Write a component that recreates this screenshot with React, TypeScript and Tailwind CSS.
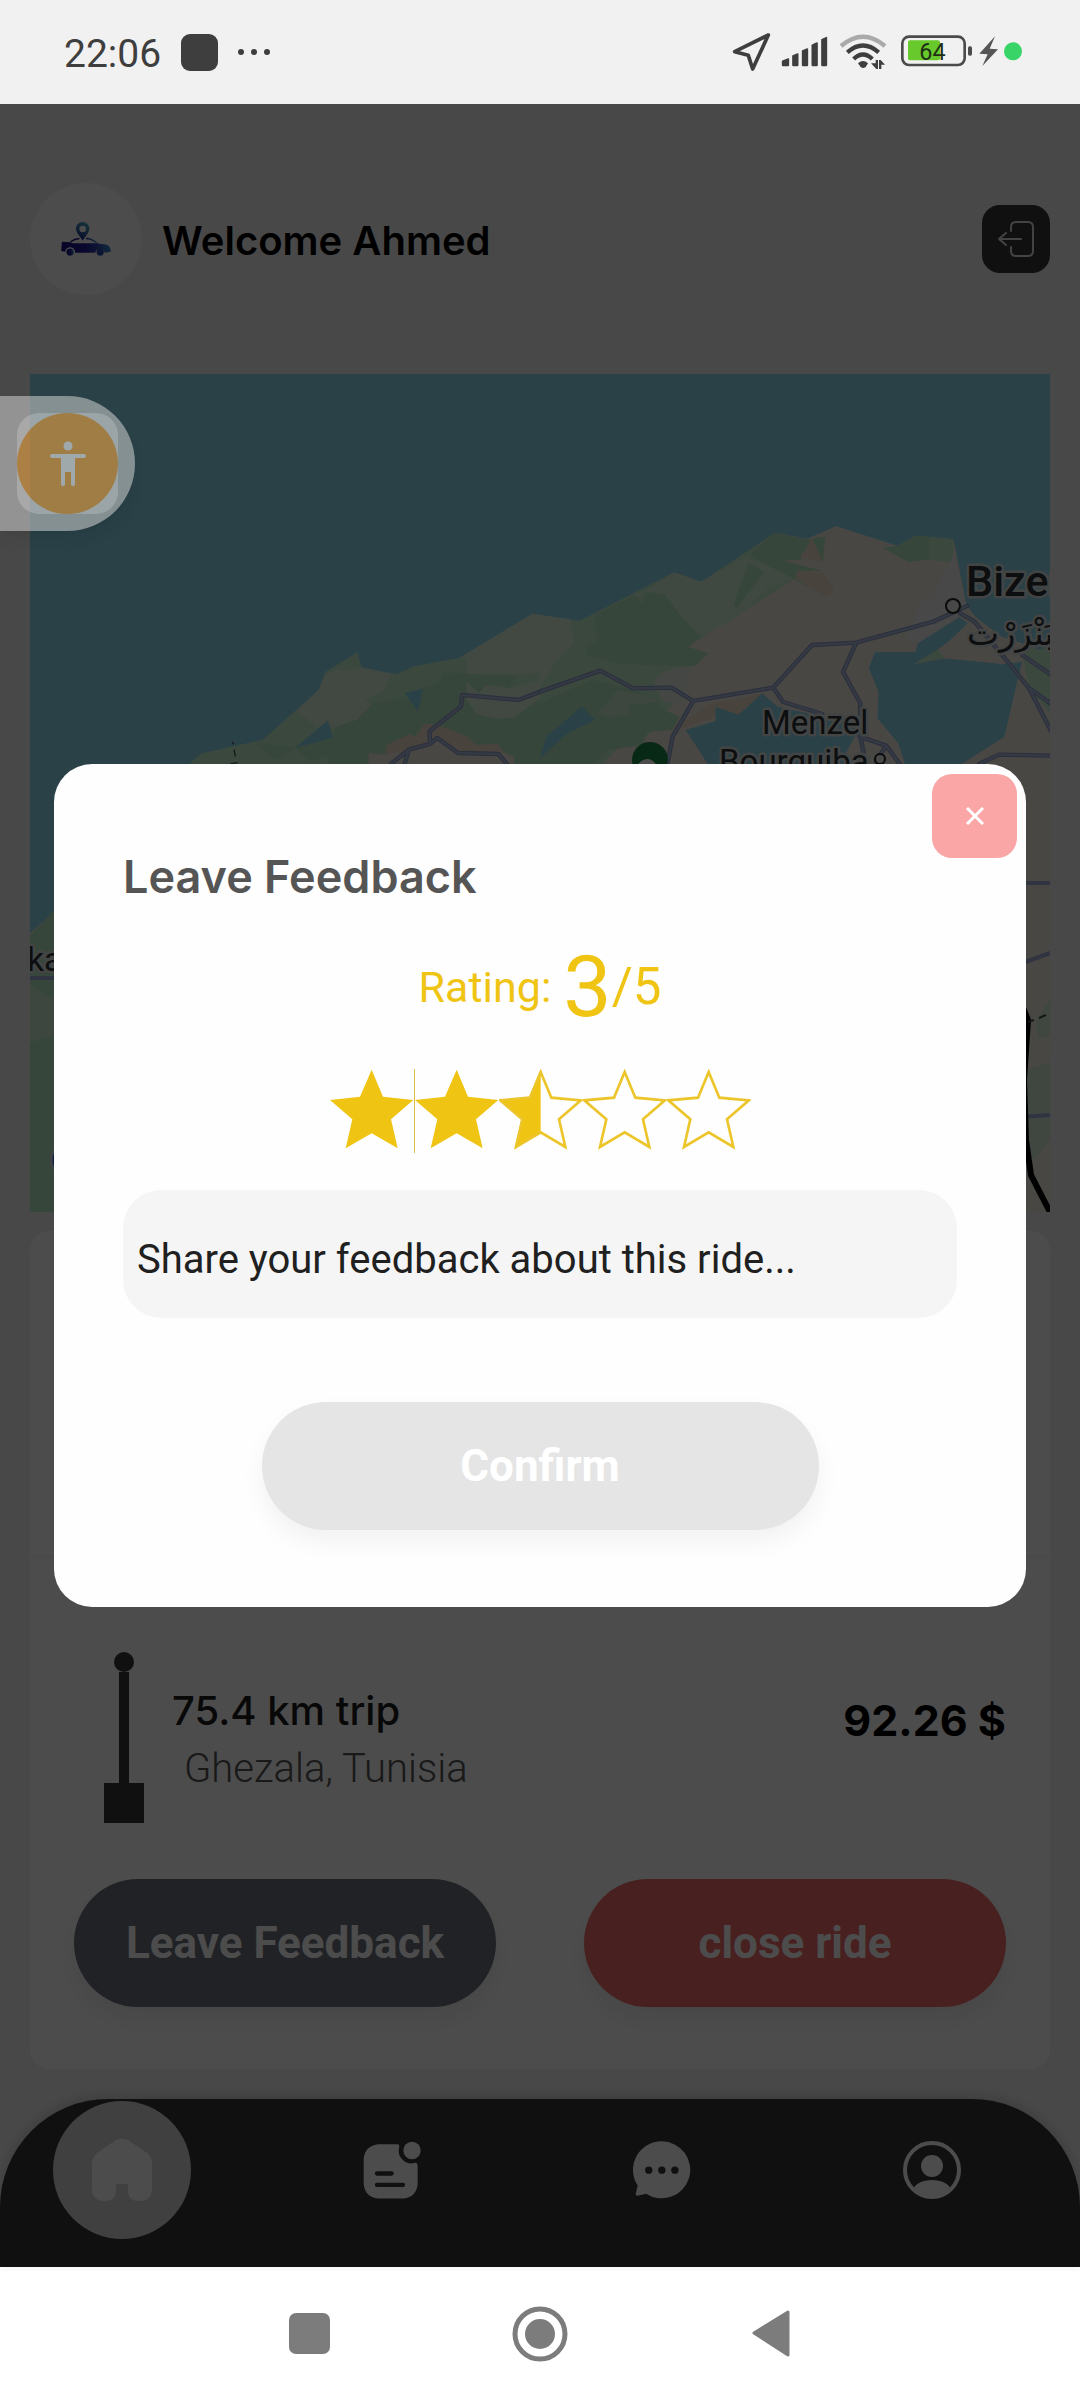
import React, { useState } from "react";

function StatusBar() {
  return (
    <div className="flex h-[104px] items-center justify-between bg-[#f1f1f1] pl-16 pr-14 text-[#3e3e3e]">
      <div className="flex items-center gap-5">
        <span className="pt-1 text-[39px] leading-[46px]">22:06</span>
        <span className="size-[37px] rounded-[9px] bg-[#3e3e3e]" />
        <span className="flex gap-[7px]">
          <span className="size-[6px] rounded-full bg-current" />
          <span className="size-[6px] rounded-full bg-current" />
          <span className="size-[6px] rounded-full bg-current" />
        </span>
      </div>
      <svg viewBox="96 98 876 120" className="h-10 w-[292px]" role="img" aria-label="Location on, full signal, Wi-Fi, battery 64 percent, charging">
        <path d="M205 107 L104 157 L145 168 L158 209 Z" fill="none" stroke="#3e3e3e" strokeWidth="11" strokeLinejoin="round" />
        <g fill="#3e3e3e" stroke="#3e3e3e" strokeWidth="5" strokeLinejoin="round">
          <path d="M248 186 L265 179 V198 H248Z" />
          <path d="M279 170 L293 164 V198 H279Z" />
          <path d="M308 155 L322 149 V198 H308Z" />
          <path d="M337 138 L351 131 V198 H337Z" />
          <path d="M366 121 L379 115 V198 H366Z" />
        </g>
        <g fill="none" strokeWidth="13">
          <path d="M423 140 Q489 84 555 140" stroke="#aaaaaa" />
          <path d="M442 159 Q489 118 536 159" stroke="#3e3e3e" />
          <path d="M461 179 Q489 152 517 179" stroke="#3e3e3e" />
        </g>
        <path d="M474 192 Q489 178 504 192 L497 203 Q489 209 482 203Z" fill="#3e3e3e" />
        <path d="M513 192 L529 209 H534 V182 H527 V192Z M537 182 V209 H544 V196 H555 L542 182Z" fill="#3e3e3e" />
        <rect x="607" y="112" width="187" height="85" rx="20" fill="none" stroke="#4b4b4b" strokeWidth="8" />
        <rect x="624" y="123" width="96" height="60" rx="6" fill="#67c92b" />
        <text x="658" y="182" fontSize="70" fill="#1f2f16">64</text>
        <rect x="804" y="141" width="12" height="28" rx="5" fill="#4b4b4b" />
        <path d="M885 111 L838 163 L863 165 L847 200 L894 150 L869 148Z" fill="#555555" />
        <circle cx="939" cy="156" r="27" fill="#38d468" />
      </svg>
    </div>
  );
}

function CarLogo() {
  return (
    <svg viewBox="0 0 150 103" className="h-[34px] w-[50px]" aria-hidden="true">
      <defs>
        <linearGradient id="car" x1="0" x2="1">
          <stop offset="0" stopColor="#160d80" />
          <stop offset="0.5" stopColor="#251a98" />
          <stop offset="1" stopColor="#3a86c8" />
        </linearGradient>
        <linearGradient id="pin" x1="0.7" y1="0" x2="0.3" y2="1">
          <stop offset="0" stopColor="#4aaec8" />
          <stop offset="1" stopColor="#1f2288" />
        </linearGradient>
      </defs>
      <path fillRule="evenodd" fill="url(#pin)" d="M65 0 C53 0 45 9 45 20 C45 34 57 43 65 57 C73 43 85 34 85 20 C85 9 77 0 65 0Z M65 11 A10 10 0 1 1 65 31 A10 10 0 1 1 65 11Z" />
      <path fill="none" stroke="url(#car)" strokeWidth="4" d="M28 60 Q40 51 55 50 M75 50 Q92 50 108 64" />
      <path fill="url(#car)" d="M2 60 L28 61 L35 64 H108 L138 69 Q150 74 150 90 L132 93 A15 15 0 0 0 103 93 H42 A15 15 0 0 0 12 90 L0 88Z" />
      <circle cx="27" cy="91" r="11" fill="url(#car)" />
      <circle cx="118" cy="91" r="11" fill="#2a4aa8" />
    </svg>
  );
}

const WEST_ROADS =
  "M1570 995 L1505 1020 L1342 1005 L1338 1040 L1247 1114 L1249 1152 L1187 1169 L1135 1212 M1187 1169 L1175 1212 M1249 1152 L1270 1134 L1330 1179 L1447 1182 L1472 1212";

const EAST_ROADS =
  "M0 995 L175 932 L270 985 L382 983 L445 1023 L677 983 L790 855 L918 848 L1145 784 L1240 738 M445 1023 L385 1130 L370 1212 M677 983 L706 1026 L820 1062 M918 848 L880 936 L930 1030 L928 1130 L1005 1157 L1045 1212 M1005 1157 L975 1205 M932 1140 L940 1180 M1220 760 L1262 785 L1350 895 L1420 985 L1485 1115 M1400 885 L1485 945 M1420 985 L1485 1032 M1275 1212 L1333 1184 L1485 1187";

function RideMap() {
  return (
    <svg viewBox="30 374 1020 838" preserveAspectRatio="xMidYMin slice" className="h-[838px] w-full" role="img" aria-label="Map of northern Tunisia">
      <rect x="30" y="374" width="1020" height="838" fill="#8cd9f0" />
      <path fill="#f3ede0" d="M180 764 H1050 V1212 H30 V933 L54 912Z" />
      <path fill="#b7e9c1" d="M30 935 L45 920 L54 910 V1212 H30Z" />
      <path fill="#cdeed6" d="M30 985 L54 1000 V1035 L30 1043Z" />
      <g transform="translate(0 360) scale(0.3444 0.3333)">
        <path fill="#c5f0cf" d="M550 1212 L585 1180 L762 1140 L925 990 L945 935 L1038 877 L1050 924 L1150 942 L1205 918 L1335 893 L1545 762 L1570 765 V1212Z" />
        <path fill="#dcf3e2" d="M862 1052 L925 990 L940 950 L975 928 L1010 932 L1050 922 L1138 942 L1115 990 L1060 1020 L1080 1032 L1035 1080 L985 1110 L965 1100 L920 1104Z" />
        <path fill="#dcf3e2" d="M1335 893 L1545 762 L1570 765 V940 L1355 945 V895Z" />
        <path fill="#b7e9c1" d="M740 1150 L862 1163 L965 1130 L975 1100 L1035 1080 L1085 1028 L1180 1015 L1215 1055 L1225 985 L1272 970 L1286 937 L1493 950 L1480 985 L1412 975 L1390 1000 L1355 965 V1020 L1385 1062 L1445 1076 L1490 1073 L1570 1015 V1212 H720 L795 1200Z" />
        <path fill="#c5f0cf" d="M740 1150 L795 1200 L860 1165 L900 1205 L955 1185 V1212 H700Z" />
        <path fill="#dcf3e2" d="M1355 965 L1390 1000 L1412 975 L1480 985 L1570 960 V1015 L1490 1073 L1445 1076 L1385 1062 L1355 1020Z" />
        <path fill="#8cd9f0" d="M1175 999 L1228 986 L1214 1055Z M857 1164 L952 1081 L966 1133Z" />
        <path fill="#f3ede0" d="M1070 1178 L1118 1185 L1240 1140 L1270 1125 L1400 1160 L1460 1175 L1493 1190 V1212 H1070Z" />
        <path fill="#f2e0cd" d="M1118 1182 L1122 1155 L1193 1121 L1205 1132 L1232 1092 L1257 1092 L1350 1126 L1384 1155 L1445 1150 L1464 1180 L1330 1180 L1270 1135 L1250 1155 L1185 1170Z" />
        <g fill="none" strokeLinejoin="round" strokeLinecap="round">
          <path stroke="#8c9dc8" strokeWidth="13" d={WEST_ROADS} />
          <path stroke="#adbee3" strokeWidth="7" d={WEST_ROADS} />
          <path stroke="#4a5a50" strokeWidth="4" d="M676 1147 L677 1152 M680 1170 L683 1188 M670 1212 L688 1208" />
        </g>
      </g>
      <g transform="translate(540 360) scale(0.3444 0.3333)">
        <path fill="#c5f0cf" d="M0 765 L115 782 L390 637 L468 665 L683 518 L775 537 L860 499 L1038 558 L1090 528 L1200 538 L1238 735 L1265 772 L1340 830 L1481 880 V1240 H0Z" />
        <path fill="#f3ede0" d="M428 862 L740 656 L615 590 L683 518 L775 537 L860 499 L1038 558 L1090 528 L1200 538 L1238 735 L1265 772 L1340 830 L1400 850 L1481 1010 V1240 H160 L230 1160 L310 1130 L410 1000 L445 920 L490 880Z" />
        <path fill="#d5f0dc" d="M160 765 L310 690 L390 637 L468 665 L600 590 L740 656 L665 680 L575 770 L468 832 L370 800 L300 700Z" />
        <path fill="#b7e9c1" d="M158 768 L275 705 L297 733 L305 695 L362 703 L410 770 L468 830 L428 860 L490 880 L452 917 L395 918 L230 912 L135 885 L132 855 L165 850Z" />
        <path fill="#b7e9c1" d="M615 580 L683 518 L775 537 L828 530 L822 605 L760 580 L758 600 L705 602 L822 633 L748 632 L742 655 L833 710 L615 590Z M605 610 L652 635 L572 745 L562 735Z" />
        <path fill="#f2e0cd" d="M789 535 L822 605 L757 592Z M748 632 L822 635 L856 690 L833 712 L742 656Z" />
        <path fill="#b7e9c1" d="M995 563 L1038 558 L1090 528 L1130 530 V598 L1070 607Z" />
        <path fill="#c5f0cf" d="M1130 530 L1200 538 V585 L1190 607 L1130 598Z" />
        <path fill="#f4f2f2" d="M1203 583 L1238 735 L1210 775 L1097 850 L1060 835 L1118 710 L1138 718Z" />
        <path fill="#dcf3e2" d="M0 765 L88 778 L100 850 L50 900 L0 980Z" />
        <path fill="#e3efe0" d="M330 965 Q350 920 450 918 L420 975 L440 1020 L360 1030Z" />
        <path fill="#b7e9c1" d="M0 1030 L150 960 L270 990 L340 1020 L350 1045 L405 1070 L385 1110 L310 1115 L300 1155 L200 1170 L160 1212 H0Z" />
        <path fill="#cdeed6" d="M170 1060 L225 990 L300 1005 L350 1025 L260 1035 L255 1065 L200 1072Z" />
        <path fill="#f2e0cd" d="M400 1110 L510 1070 V1040 L577 1064 L645 1000 L600 1012 L500 1030 L390 1100 L500 1212Z" />
        <path fill="#8cd9f0" d="M0 1195 L18 1130 L122 1039 L160 1080 L80 1120Z" />
        <path fill="#8cd9f0" d="M423 1110 L510 1083 V1040 L577 1064 L645 1000 L690 1040 L820 1070 L920 1070 L925 1110 L890 1175 L880 1240 H505Z" />
        <path fill="#8cd9f0" d="M1218 772 L1242 790 L1170 862 L1085 912 L1175 895 L1345 912 L1400 905 L1388 955 L1348 1130 L1225 1212 H1060 L1040 1150 L980 1075 L983 995 L955 925 L972 877 L1090 877 L1097 850Z" />
        <path fill="#c5f0cf" d="M1085 912 L1155 868 L1175 895Z M1400 880 L1481 860 V1060 L1420 985Z" />
        <path fill="#f3ede0" d="M1155 868 L1180 850 L1245 790 L1265 775 L1345 840 L1400 905 L1345 912 L1175 895Z" />
        <g fill="none" strokeLinejoin="round" strokeLinecap="round">
          <path stroke="#8c9dc8" strokeWidth="13" d={EAST_ROADS} />
          <path stroke="#adbee3" strokeWidth="7" d={EAST_ROADS} />
        </g>
      </g>
      <path fill="#d5eedb" d="M1026 1070 L1050 1062 V1140 L1034 1160 L1026 1150Z M1036 1020 L1050 1000 V1037 H1038Z" />
      <path fill="none" stroke="#9fb0d8" strokeWidth="4" d="M1020 883 H1050 M1020 964 L1050 953 M1020 1117 L1050 1115 M30 978 H60" />
      <path fill="none" stroke="#000" strokeWidth="6" d="M1020 1000 L1028 1020 L1024 1080 L1026 1140 L1031 1175 L1050 1212" />
      <path fill="none" stroke="#4a4a4a" strokeWidth="2" d="M1028 1022 L1034 1020 M1039 1018 L1046 1015" />
      <circle cx="650" cy="760" r="18" fill="#1b8a4c" />
      <path d="M637 766 Q641 759 648 759 Q655 760 659 770 H637Z" fill="#fff" />
      <g fill="#2d2f33" stroke="#dfe6e6" strokeWidth="5" strokeLinejoin="round" paintOrder="stroke">
        <text x="966" y="596" fontSize="43" fontWeight="500">Bizerte</text>
        <text x="967" y="645" fontSize="34" fontFamily="'DejaVu Sans', sans-serif">بَنْزَرْت</text>
        <text x="762" y="734" fontSize="33">Menzel</text>
        <text x="719" y="773" fontSize="33">Bourguiba</text>
        <text x="62" y="971" fontSize="33" textAnchor="end">Tabarka</text>
      </g>
      <circle cx="953" cy="606" r="7" fill="#f4f2f2" stroke="#222" strokeWidth="2" />
      <circle cx="880" cy="759" r="5" fill="#f4f2f2" stroke="#222" strokeWidth="2" />
      <circle cx="68" cy="1160" r="17" fill="#2a5fe0" stroke="#cfe0e8" strokeWidth="3" />
    </svg>
  );
}

const STAR = "M125 2 L159 83 L250 93 L183 151 L203 238 L125 193 L47 238 L67 151 L0 93 L90 83Z";

type StarFill = "full" | "half" | "none";

function Star({ fill, onPick, value }: { fill: StarFill; onPick: () => void; value: number }) {
  return (
    <button type="button" aria-label={`Rate ${value} of 5`} onClick={onPick} className="size-[84px]">
      <svg viewBox="0 0 252 252" className="size-full">
        {fill === "full" && <path d={STAR} fill="#f0c413" />}
        {fill === "half" && <path d="M125 2 V193 L47 238 L67 151 L0 93 L90 83Z" fill="#f0c413" />}
        {fill !== "full" && (
          <path d="M125 9 L157 86 L246 94 L180 151 L199 234 L125 190 L51 234 L70 151 L4 94 L93 86Z" fill="none" stroke="#ecc52b" strokeWidth="8" />
        )}
      </svg>
    </button>
  );
}

const STAR_FILLS: StarFill[] = ["full", "full", "half", "none", "none"];

function FeedbackDialog() {
  const [rating, setRating] = useState(3);
  const [text, setText] = useState("");
  return (
    <div className="absolute inset-0 flex items-center bg-black/70 px-[54px]">
      <section role="dialog" aria-labelledby="feedback-title" className="relative flex w-full flex-col rounded-[38px] bg-[#fefefe] px-[69px] pb-[77px] pt-[83px]">
        <button type="button" aria-label="Close" className="absolute right-[9px] top-[10px] flex h-[84px] w-[85px] items-center justify-center rounded-[20px] bg-[#fba6a6]">
          <svg viewBox="0 0 18 18" className="size-[18px]" fill="none" stroke="#fff" strokeWidth="3">
            <path d="M1 1 L17 17 M17 1 L1 17" />
          </svg>
        </button>
        <h2 id="feedback-title" className="font-['Inter'] text-[45px] font-semibold leading-[60px] text-[#555555]">
          Leave Feedback
        </h2>
        <div className="mt-7 flex h-[104px] items-center justify-center text-[#f0c413]">
          <span className="mr-3 text-[43px] leading-[50px]">Rating:</span>
          <span className="text-[86px] leading-[100px]">{rating}</span>
          <span className="text-[51px] leading-[60px]">/5</span>
        </div>
        <div className="mt-[30px] flex justify-center">
          {STAR_FILLS.map((level, i) => (
            <React.Fragment key={i}>
              {i === 1 && <span className="h-[84px] w-px bg-[#dcc04a]" />}
              <Star fill={level} value={i + 1} onPick={() => setRating(i + 1)} />
            </React.Fragment>
          ))}
        </div>
        <input
          type="text"
          aria-label="Share your feedback about this ride"
          placeholder="Share your feedback about this ride..."
          value={text}
          onChange={(e) => setText(e.target.value)}
          className="mt-[37px] h-32 w-full rounded-[38px] bg-[#f5f5f5] px-[14px] pt-[10px] text-[40px] text-[#202020] outline-none placeholder:text-[#202020]"
        />
        <button type="button" className="mt-[84px] h-32 w-[557px] self-center rounded-full bg-[#e5e5e5] text-[44px] font-bold text-white shadow-[0_12px_24px_rgba(0,0,0,0.05)]">
          Confirm
        </button>
      </section>
    </div>
  );
}

function BottomNav() {
  return (
    <nav className="grid h-[168px] grid-cols-4 rounded-t-[108px] bg-[#363636] pt-[2px] text-white shadow-[0_-4px_12px_rgba(0,0,0,0.15)]">
      <div className="pl-[53px]">
        <a href="#home" aria-label="Home" className="flex size-[138px] items-center justify-center rounded-full bg-[#d6d6d6]">
          <svg viewBox="0 0 60 64" className="h-16 w-[60px]" fill="currentColor">
            <path d="M24 2 Q30 -1 36 2 L55 15 Q60 19 60 26 V50 Q60 63 47 63 Q36 63 36 53 V48 Q36 46 34 46 H26 Q24 46 24 48 V53 Q24 63 13 63 Q0 63 0 50 V26 Q0 19 5 15Z" />
          </svg>
        </a>
      </div>
      <div className="pl-[53px]">
        <a href="#rides" aria-label="Rides" className="flex size-[138px] items-center justify-center">
          <svg viewBox="70 93 174 173" className="size-[58px]">
            <path fill="currentColor" d="M117 102 H174 Q180 103 179 110 A38 38 0 0 0 226 158 Q233 158 234 165 V222 Q230 260 192 265 H115 Q76 260 72 222 V145 Q76 106 117 102Z" />
            <circle cx="217" cy="121" r="26" fill="currentColor" />
            <path d="M112 190 H156 M112 224 H190" stroke="#363636" strokeWidth="13" strokeLinecap="round" />
          </svg>
        </a>
      </div>
      <div className="pl-[53px]">
        <a href="#chat" aria-label="Messages" className="flex size-[138px] items-center justify-center">
          <svg viewBox="879 93 173 173" className="size-[58px]">
            <path fill="currentColor" d="M965 94 A85 85 0 1 1 918 250 L892 256 Q886 256 887 250 L893 226 A85 85 0 0 1 965 94Z" />
            <g fill="#363636">
              <circle cx="926" cy="180" r="11" />
              <circle cx="965" cy="180" r="11" />
              <circle cx="1004" cy="180" r="11" />
            </g>
          </svg>
        </a>
      </div>
      <div className="pl-[53px]">
        <a href="#profile" aria-label="Profile" className="flex size-[138px] items-center justify-center">
          <svg viewBox="0 0 58 58" className="size-[58px]">
            <circle cx="29" cy="29" r="27" fill="none" stroke="currentColor" strokeWidth="4" />
            <circle cx="29" cy="25" r="11" fill="currentColor" />
            <path fill="currentColor" d="M11 46 Q17 39 29 39 Q41 39 47 46 Q40 57 29 57 Q18 57 11 46Z" />
          </svg>
        </a>
      </div>
    </nav>
  );
}

export default function App() {
  return (
    <div className="relative flex min-h-screen flex-col bg-white font-['Roboto',sans-serif]">
      <StatusBar />
      <main className="relative flex flex-1 flex-col bg-[#f2f2f2]">
        <header className="flex h-[270px] items-center px-[30px]">
          <span className="flex size-28 items-center justify-center rounded-full bg-[#fdfdfd]">
            <CarLogo />
          </span>
          <h1 className="ml-5 pt-1 font-['Inter'] text-[40px] font-semibold leading-[54px] text-black">Welcome Ahmed</h1>
          <button type="button" aria-label="Log out" className="ml-auto flex size-[68px] items-center justify-center rounded-[18px] bg-[#363636] text-[#e0e0e0]">
            <svg viewBox="0 0 38 38" className="size-[38px]" fill="none" stroke="currentColor" strokeWidth="2" strokeLinecap="round" strokeLinejoin="round">
              <path d="M14 11 V7 Q14 2 19 2 H31 Q36 2 36 7 V31 Q36 36 31 36 H19 Q14 36 14 31 V27 M24 19 H2 M9 13 L2 19 L9 25" />
            </svg>
          </button>
        </header>
        <div className="px-[30px]">
          <RideMap />
        </div>
        <section className="mx-[30px] mb-[30px] mt-[19px] rounded-[20px] bg-white">
          <div className="h-[328px] border-b-4 border-[#f9f9f9]" />
          <div className="px-11 pb-[62px] pt-[93px]">
            <div className="flex h-[171px] pl-[30px]">
              <div className="flex w-10 flex-col items-center" aria-hidden="true">
                <span className="size-5 rounded-full bg-[#363636]" />
                <span className="w-[10px] flex-1 bg-[#363636]" />
                <span className="size-10 bg-[#363636]" />
              </div>
              <div className="ml-7 flex-1 pt-[34px]">
                <p className="font-['Inter'] text-[40px] font-medium leading-[50px] text-[#1d1d1d]">75.4 km trip</p>
                <p className="pl-3 pt-2 text-[40px] font-light leading-[50px] text-[#555555]">Ghezala, Tunisia</p>
              </div>
              <p className="pt-10 font-['Inter'] text-[43px] font-bold leading-[56px] text-black">92.26 $</p>
            </div>
            <div className="mt-14 flex justify-between text-[44px] font-bold text-white">
              <button type="button" className="h-32 w-[422px] rounded-full bg-[#6e727f] shadow-[0_12px_24px_rgba(0,0,0,0.07)]">
                Leave Feedback
              </button>
              <button type="button" className="h-32 w-[422px] rounded-full bg-[#f06d6d] shadow-[0_12px_24px_rgba(0,0,0,0.07)]">
                close ride
              </button>
            </div>
          </div>
        </section>
        <BottomNav />
        <FeedbackDialog />
      </main>
      <footer className="flex h-[133px] items-center justify-center gap-[175px] bg-white text-[#7c7c7c]">
        <button type="button" aria-label="Recent apps" className="flex size-14 items-center justify-center">
          <span className="size-[41px] rounded-[7px] bg-current" />
        </button>
        <button type="button" aria-label="Home screen" className="flex size-14 items-center justify-center">
          <svg viewBox="0 0 56 56" className="size-14">
            <circle cx="28" cy="28" r="25" fill="none" stroke="currentColor" strokeWidth="5" />
            <circle cx="28" cy="28" r="15" fill="currentColor" />
          </svg>
        </button>
        <button type="button" aria-label="Back" className="flex size-14 items-center justify-center">
          <svg viewBox="0 0 38 47" className="h-[47px] w-[38px]">
            <path fill="currentColor" stroke="currentColor" strokeWidth="3" strokeLinejoin="round" d="M36 2 L2 23 L36 45Z" />
          </svg>
        </button>
      </footer>
      <button type="button" aria-label="Accessibility menu" className="absolute left-0 top-[396px] flex h-[135px] w-[135px] items-center rounded-r-full bg-[#d1d1d1] pl-[17px] opacity-55 shadow-lg">
        <span className="flex size-[101px] items-center justify-center rounded-[22px] bg-[#f8f8f8]">
          <svg viewBox="0 0 202 202" className="size-full">
            <circle cx="101" cy="101" r="101" fill="#ffaf43" />
            <g fill="#fff">
              <circle cx="102" cy="66" r="9" />
              <rect x="66" y="82" width="72" height="8" rx="4" />
              <path d="M88 86 H116 V144 Q112 148 108 144 V118 H96 V144 Q92 148 88 144Z" />
            </g>
          </svg>
        </span>
      </button>
    </div>
  );
}
